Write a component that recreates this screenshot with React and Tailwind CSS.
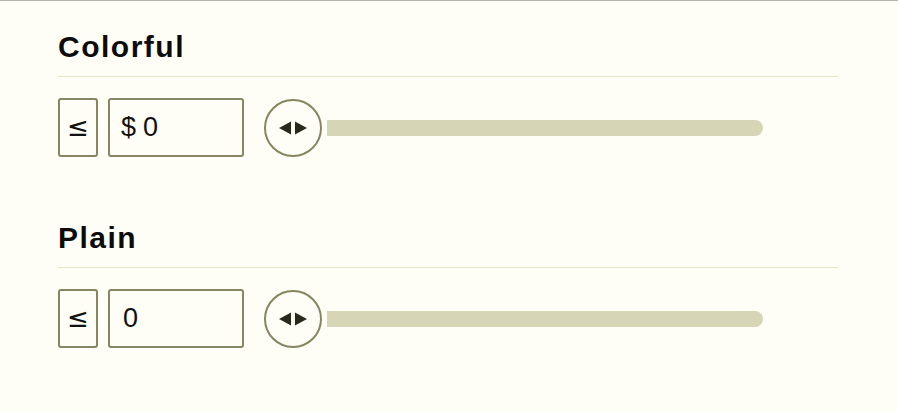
import React from "react";

function Thumb() {
  return (
    <div className="w-[58px] h-[58px] shrink-0 rounded-full border-2 border-[#878661] bg-[#fefef7] flex items-center justify-center">
      <svg width="28" height="14" viewBox="0 0 28 14">
        <polygon points="0,7 12,0.5 12,13.5" fill="#2a2a1c" />
        <polygon points="16,0.5 28,7 16,13.5" fill="#2a2a1c" />
      </svg>
    </div>
  );
}

function Section({ title, prefix, className }) {
  return (
    <div className={className}>
      <div className="border-b border-[#e8e6c6] pb-[11px]">
        <h2 className="text-[30px] leading-[36px] font-bold tracking-[0.05em] text-[#0c0c0c] font-['Liberation_Sans',Arial,sans-serif]">
          {title}
        </h2>
      </div>
      <div className="mt-[21px] flex items-center">
        <div className="w-[40px] h-[59px] border-2 border-[#878661] rounded-[3px] flex items-center justify-center text-[26px] text-[#111] font-['DejaVu_Sans',sans-serif]">
          ≤
        </div>
        <div
          className={
            "ml-[10px] w-[136px] h-[59px] border-2 border-[#878661] rounded-[3px] flex items-center text-[27px] text-[#111] font-['Liberation_Sans',Arial,sans-serif] " +
            (prefix ? "pl-[11px]" : "pl-[13px]")
          }
        >
          {prefix && <span className="mr-[7px]">{prefix}</span>}
          <span>0</span>
        </div>
        <div className="ml-[20px] flex items-center">
          <Thumb />
          <div className="ml-[5px] w-[436px] h-[16px] rounded-r-full bg-[#d6d5b6]" />
        </div>
      </div>
    </div>
  );
}

export default function App() {
  return (
    <div className="w-[898px] h-[412px] bg-[#fefef7] border-t border-[#b4b4b0] overflow-hidden">
      <div className="pl-[58px] w-[838px] pt-[28px]">
        <Section title="Colorful" prefix="$" />
        <Section title="Plain" className="mt-[63px]" />
      </div>
    </div>
  );
}
